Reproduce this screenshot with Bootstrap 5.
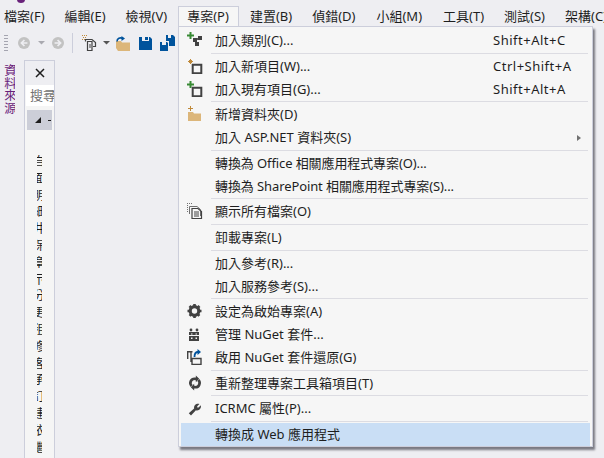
<!DOCTYPE html>
<html lang="zh-Hant">
<head>
<meta charset="utf-8">
<title>專案功能表</title>
<link rel="stylesheet" href="https://cdn.jsdelivr.net/npm/bootstrap@5.3.0/dist/css/bootstrap.min.css">
<style>
html,body{height:458px;overflow:hidden}
body{background:#eeeef2;color:#1e1e1e;font:13px/1.2 "Noto Sans","Noto Sans CJK TC",sans-serif;position:relative}
.vs-logo{position:absolute;left:17px;top:-4px;width:8px;height:7px;background:#68217a;border-radius:50%}
.vs-bar{height:26px;padding-left:4px;gap:20px;white-space:nowrap;overflow:hidden;position:relative;z-index:3}
.vs-top{height:19px;line-height:19px}
.vs-open{padding:0 9px 0 8px;margin:0 -9px 0 -9px;height:20px;background:#f6f6f6;border:1px solid #cccedb;border-bottom:0}
.vs-nudge{margin-left:1px}
.vs-tools{height:34px;padding-left:4px}
.vs-tools svg{display:block;flex:none}
.vs-grip{width:4px;height:18px;background-image:radial-gradient(circle,#a5a5b0 35%,transparent 40%);background-size:2px 3px;flex:none}
.vs-sep{width:1px;height:20px;background:#cccedb;flex:none}
.vs-work{height:398px}
.vs-side{width:24px;padding:4px 0 0 3px;flex:none}
.vs-vert{writing-mode:vertical-rl;color:#68217a;font-size:12.5px;line-height:12px;width:12px;overflow:hidden}
.vs-panel{width:31px;border:1px solid #cccedb;border-bottom:0;background:#f5f5f5;height:398px;overflow:hidden;flex:none}
.vs-close{height:24px;background:#eeeef2}
.vs-search{height:21px;margin:0 0 0 1px;padding-left:4px;background:#fff;color:#717171;line-height:21px;white-space:nowrap;overflow:hidden}
.vs-node{height:20px;margin:4px 2px 0 2px;background:#ccced8;padding-left:8px;gap:7px}
.vs-dash{width:3px;height:1px;background:#1e1e1e}
.vs-list{padding:25px 0 0 12px}
.vs-slice{width:5px;height:16.8px;overflow:hidden;white-space:nowrap;text-indent:-4px;line-height:13px;font-size:12px}
.vs-menu{position:absolute;left:178px;top:26px;width:415px;height:421px;margin:0;padding:2px 2px 0;background:#f6f6f6;border:1px solid #cccedb;border-radius:0;box-shadow:2px 3px 2px rgba(60,60,70,.65);z-index:2;list-style:none;display:block}
.vs-item{height:22.75px;line-height:22.75px;white-space:nowrap;position:relative;padding:0 0 0 34px;color:#1e1e1e}
.vs-item svg{position:absolute;left:6px;top:3px}
.vs-key{position:absolute;left:312px;top:0;letter-spacing:.5px}
.vs-more{position:absolute;left:396px;top:9px;border-left:4px solid #717171;border-top:3.5px solid transparent;border-bottom:3.5px solid transparent}
.vs-rule{height:1px;margin:1px 2px 1px 30px;background:#dcdce2}
.vs-hot{background:#c9def5}
.vs-tight{letter-spacing:-.1px}
</style>
</head>
<body>
<div class="vs-logo"></div>
<nav class="vs-bar d-flex align-items-end">
  <span class="vs-top">檔案(F)</span>
  <span class="vs-top">編輯(E)</span>
  <span class="vs-top">檢視(V)</span>
  <span class="vs-top vs-open">專案(P)</span>
  <span class="vs-top">建置(B)</span>
  <span class="vs-top">偵錯(D)</span>
  <span class="vs-top vs-nudge">小組(M)</span>
  <span class="vs-top vs-nudge">工具(T)</span>
  <span class="vs-top">測試(S)</span>
  <span class="vs-top">架構(C)</span>
</nav>
<div class="vs-tools d-flex align-items-center">
  <div class="vs-grip"></div>
  <svg width="12" height="12" viewBox="0 0 14 14" style="margin-left:10px"><circle cx="7" cy="7" r="7" fill="#c2c2c2"/><path d="M7.500 3.500 4 7l3.500 3.500M4.500 7H11" stroke="#eeeef2" stroke-width="2" fill="none"/></svg>
  <svg width="7" height="4" viewBox="0 0 7 4" style="margin-left:8px"><path d="M0 0h7L3.500 3.500z" fill="#a9a9b0"/></svg>
  <svg width="12" height="12" viewBox="0 0 14 14" style="margin-left:7px"><circle cx="7" cy="7" r="7" fill="#c2c2c2"/><path d="M6.500 3.500 10 7l-3.500 3.500M9.500 7H3" stroke="#eeeef2" stroke-width="2" fill="none"/></svg>
  <div class="vs-sep" style="margin-left:8px"></div>
  <svg width="15" height="16" viewBox="0 0 15 16" style="margin-left:9px"><path d="M0 0h1v1H0zM2 0h1v1H2zM4 0h1v1H4zM1 2h1v1H1zM3 2h1v1H3zM0 4h1v1H0zM2 4h1v1H2z" fill="#c08a3a"/><path d="M3.500 6.500v-2H10l3.500 3v4H11M5.500 15.500v-9H10v9zM7 10h2M7 12h2" fill="none" stroke="#424242" stroke-width="1.200"/></svg>
  <svg width="7" height="4" viewBox="0 0 7 4" style="margin-left:6px"><path d="M0 0h7L3.500 3.500z" fill="#555"/></svg>
  <svg width="15" height="15" viewBox="0 0 15 15" style="margin-left:6px"><path d="M0 5h5l1 1.500h8V15H2L0 12z" fill="#dcb67a"/><path d="M1 5.500C1 2.500 4 1 7 2.500" fill="none" stroke="#00539c" stroke-width="1.600"/><path d="M5.500 0 9 2.500 5.500 5z" fill="#00539c"/></svg>
  <svg width="13" height="13" viewBox="0 0 13 13" style="margin-left:8px"><path d="M0 0h3v4h7V0h1l2 2v11H0z" fill="#00539c"/><path d="M6 0h3v3H6z" fill="#00539c"/></svg>
  <svg width="15" height="16" viewBox="0 0 15 16" style="margin-left:8px"><path d="M0 7h2v3h4V7h1l1 1v8H0z" fill="#00539c"/><path d="M6 0h2v3h3V0h2l2 2v9H9V6H6z" fill="#00539c"/></svg>
</div>
<div class="vs-work d-flex">
  <div class="vs-side"><div class="vs-vert">資料來源</div></div>
  <div class="vs-panel">
    <div class="vs-close d-flex align-items-center justify-content-center"><svg width="10" height="10" viewBox="0 0 10 10"><path d="M1 1l8 8M9 1l-8 8" stroke="#1e1e1e" stroke-width="1.500"/></svg></div>
    <div class="vs-search">搜尋</div>
    <div class="vs-node d-flex align-items-center"><svg width="6" height="6" viewBox="0 0 6 6"><path d="M6 0v6H0z" fill="#1e1e1e"/></svg><div class="vs-dash"></div></div>
    <div class="vs-list">
      <div class="vs-slice">自</div><div class="vs-slice">面</div><div class="vs-slice">明</div><div class="vs-slice">細</div><div class="vs-slice">井</div><div class="vs-slice">保</div><div class="vs-slice">章</div><div class="vs-slice">示</div><div class="vs-slice">分</div><div class="vs-slice">更</div><div class="vs-slice">租</div><div class="vs-slice">修</div><div class="vs-slice">客</div><div class="vs-slice">承</div><div class="vs-slice">訂</div><div class="vs-slice">建</div><div class="vs-slice">依</div><div class="vs-slice">繼</div>
    </div>
  </div>
</div>
<ul class="vs-menu">
  <li class="vs-item"><svg width="16" height="16" viewBox="0 0 16 16"><path d="M2.500 0h2v2.500H7v2H4.500V7h-2V4.500H0v-2h2.500z" fill="#388a34"/><path d="M6 6h4v4H6zM11 4h4v4h-4zM8 10h4v4H8z" fill="#424242"/><path d="M8 8 13 6M8 8 10 12" stroke="#424242" stroke-width="1.500"/></svg>加入類別(C)...<span class="vs-key">Shift+Alt+C</span></li>
  <li class="vs-rule"></li>
  <li class="vs-item"><svg width="16" height="16" viewBox="0 0 16 16"><path d="M3 1h1v1H3zM1 3h1v1H1zM5 3h1v1H5zM3 5h1v1H3zM2 2h3v3H2z" fill="#c08a3a"/><path d="M5.700 6.700h8.600v8.600H5.700z" fill="none" stroke="#424242" stroke-width="2"/></svg>加入新項目(W)...<span class="vs-key">Ctrl+Shift+A</span></li>
  <li class="vs-item"><svg width="16" height="16" viewBox="0 0 16 16"><path d="M2.500 0h2v2.500H7v2H4.500V7h-2V4.500H0v-2h2.500z" fill="#388a34"/><path d="M5.700 6.700h8.600v8.600H5.700z" fill="none" stroke="#424242" stroke-width="2"/></svg>加入現有項目(G)...<span class="vs-key">Shift+Alt+A</span></li>
  <li class="vs-rule"></li>
  <li class="vs-item"><svg width="16" height="16" viewBox="0 0 16 16"><path d="M1 6h5l1 1.500h7V15H1z" fill="#dcb67a"/><path d="M3 0h1v2h2v1H4v2H3V3H1V2h2z" fill="#c08a3a"/></svg>新增資料夾(D)</li>
  <li class="vs-item">加入 ASP.NET 資料夾(S)<span class="vs-more"></span></li>
  <li class="vs-rule"></li>
  <li class="vs-item vs-tight">轉換為 Office 相關應用程式專案(O)...</li>
  <li class="vs-item vs-tight">轉換為 SharePoint 相關應用程式專案(S)...</li>
  <li class="vs-rule"></li>
  <li class="vs-item"><svg width="16" height="16" viewBox="0 0 16 16"><path d="M0 0h1v1H0zM2 0h1v1H2zM4 0h1v1H4zM0 2h1v1H0zM0 4h1v1H0zM0 6h1v1H0zM0 8h1v1H0z" fill="#717171"/><path d="M2.500 11V3.500H10l3.500 3V13" fill="none" stroke="#717171"/><path d="M5 5.500h6l3.500 3V15.500H5zM7 9h5M7 11h5M7 13h5" fill="none" stroke="#424242" stroke-width="1.200"/></svg>顯示所有檔案(O)</li>
  <li class="vs-rule"></li>
  <li class="vs-item">卸載專案(L)</li>
  <li class="vs-rule"></li>
  <li class="vs-item">加入參考(R)...</li>
  <li class="vs-item">加入服務參考(S)...</li>
  <li class="vs-rule"></li>
  <li class="vs-item"><svg width="16" height="16" viewBox="0 0 16 16"><circle cx="7.500" cy="8" r="4.300" fill="none" stroke="#424242" stroke-width="3.200"/><path d="M7.500 1v14M.5 8h14M2.500 3l10 10M12.500 3l-10 10" stroke="#424242" stroke-width="2.600" stroke-dasharray="2.400 9.200"/></svg>設定為啟始專案(A)</li>
  <li class="vs-item"><svg width="16" height="16" viewBox="0 0 16 16"><path d="M2 6h10v9H2z" fill="#424242"/><circle cx="4" cy="4" r="1.400" fill="#424242"/><circle cx="10" cy="4" r="1.400" fill="#424242"/><path d="M2 9.500h10" stroke="#f6f6f6"/><path d="M4 7.500h1.500v1H4zM8.500 7.500H10v1H8.500zM4 11.500h1.500V13H4zM8.500 11.500H10V13H8.500z" fill="#f6f6f6"/></svg>管理 NuGet 套件...</li>
  <li class="vs-item"><svg width="16" height="16" viewBox="0 0 16 16"><path d="M4 13V3.500M.7 10V2.700H5.500M5 9.500h9v6H5z" fill="none" stroke="#424242" stroke-width="1.400"/><path d="M7.500 8c0-3.500 1.500-5 3.500-5" fill="none" stroke="#00539c" stroke-width="1.800"/><path d="M10.500 0l3.500 3-3.500 3z" fill="#00539c"/></svg>啟用 NuGet 套件還原(G)</li>
  <li class="vs-rule"></li>
  <li class="vs-item"><svg width="16" height="16" viewBox="-1.500 -1.500 19 19"><path d="M4 11.500A5 5 0 0 1 8 3h2M12 4.500A5 5 0 0 1 8 13H6" fill="none" stroke="#424242" stroke-width="3.200"/><path d="M9 -1l4 4-4 4zM7 9l-4 4 4 4z" fill="#424242"/></svg>重新整理專案工具箱項目(T)</li>
  <li class="vs-rule"></li>
  <li class="vs-item"><svg width="16" height="16" viewBox="-1 -2 18 18"><path d="M1 13 7 7.500C6.500 4 9.500 1.500 13 2.500L10.500 5v1.500H12L14.500 4C15.500 7.500 12.500 10.500 9 9.500L3.500 15.500z" fill="#424242"/></svg>ICRMC 屬性(P)...</li>
  <li class="vs-rule"></li>
  <li class="vs-item vs-hot">轉換成 Web 應用程式</li>
</ul>
</body>
</html>
